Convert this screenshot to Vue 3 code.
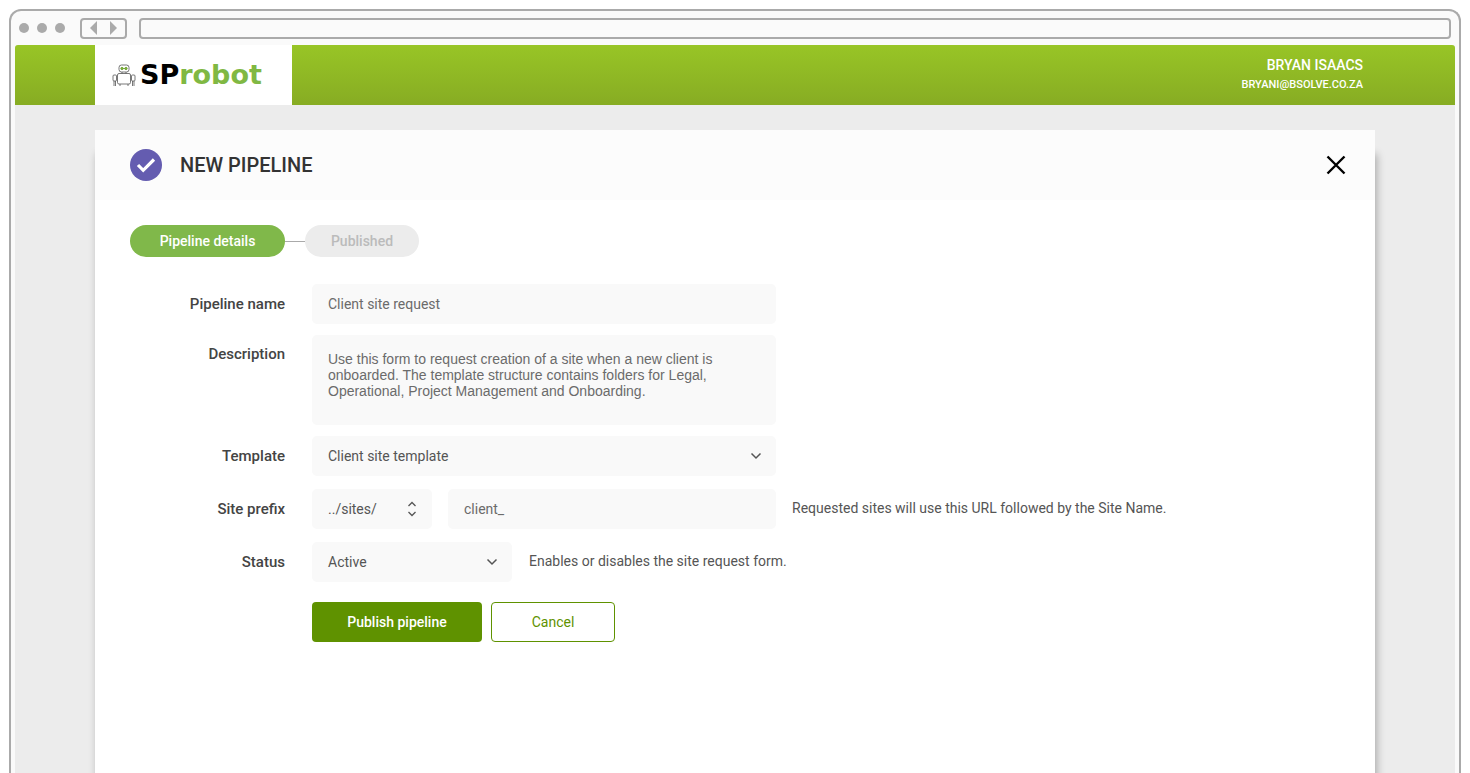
<template>
  <div class="browser">
    <div class="chrome">
      <div class="dots">
        <span class="dot"></span>
        <span class="dot"></span>
        <span class="dot"></span>
      </div>
      <div class="nav-btns">
        <svg width="8" height="14" viewBox="0 0 8 14"><path d="M7 0v14L0 7z" fill="#aaa" /></svg>
        <svg width="8" height="14" viewBox="0 0 8 14"><path d="M1 0v14L8 7z" fill="#aaa" /></svg>
      </div>
      <div class="address"></div>
    </div>

    <div class="viewport">
      <header class="topbar">
        <div class="logo">
          <svg class="robot" width="24" height="23" viewBox="0 0 24 23" fill="none" stroke="#555" stroke-width="0.8">
            <rect x="7" y="1" width="10" height="7" rx="2.500" />
            <circle cx="10" cy="4.500" r="1.200" fill="#7fb83a" stroke="#6a9a30" />
            <circle cx="14" cy="4.500" r="1.200" fill="#7fb83a" stroke="#6a9a30" />
            <path d="M11 4.500h2" stroke="#6a9a30" />
            <path d="M10 8v1.500M14 8v1.500" />
            <rect x="5.500" y="9.500" width="13" height="10.500" rx="1.500" />
            <rect x="1" y="11" width="3.500" height="6" rx="1" />
            <rect x="19.500" y="11" width="3.500" height="6" rx="1" />
            <path d="M2 17v5M3.500 17v5M20.500 17v5M22 17v5M8 20v2M16 20v2" />
          </svg>
          <span class="brand"><b>SP</b><em>robot</em></span>
        </div>
        <div class="user">
          <div class="user-name">BRYAN ISAACS</div>
          <div class="user-mail">BRYANI@BSOLVE.CO.ZA</div>
        </div>
      </header>

      <main class="content">
        <section class="card">
          <div class="card-head">
            <svg width="32" height="32" viewBox="0 0 32 32">
              <circle cx="16" cy="16" r="16" fill="#645cb0" />
              <path d="M8 16l5.200 5.300L24 10.500" fill="none" stroke="#fff" stroke-width="3.200" />
            </svg>
            <h1>NEW PIPELINE</h1>
            <svg class="close" width="20" height="20" viewBox="0 0 20 20">
              <path d="M1.500 1.500l17 17M18.500 1.500l-17 17" stroke="#000" stroke-width="2.400" fill="none" />
            </svg>
          </div>

          <div class="card-body">
            <div class="steps">
              <div class="step active">Pipeline details</div>
              <div class="step-line"></div>
              <div class="step">Published</div>
            </div>

            <div class="form">
              <label class="lbl">Pipeline name</label>
              <input class="field wide soft" type="text" v-model="pipelineName" />

              <label class="lbl lbl-top">Description</label>
              <textarea class="field wide area soft" v-model="description"></textarea>

              <label class="lbl">Template</label>
              <div class="field wide select">
                <span>Client site template</span>
                <svg width="12" height="8" viewBox="0 0 12 8"><path d="M1.500 1.500L6 6l4.500-4.500" fill="none" stroke="#555" stroke-width="1.500" /></svg>
              </div>

              <label class="lbl spaced">Site prefix</label>
              <div class="inline spaced">
                <div class="field select prefix">
                  <span>../sites/</span>
                  <svg width="10" height="16" viewBox="0 0 10 16"><path d="M1.500 5L5 1.500 8.500 5M1.500 11L5 14.500 8.500 11" fill="none" stroke="#555" stroke-width="1.300" /></svg>
                </div>
                <input class="field slug soft" type="text" v-model="slug" />
                <span class="hint">Requested sites will use this URL followed by the Site Name.</span>
              </div>

              <label class="lbl spaced">Status</label>
              <div class="inline spaced">
                <div class="field select status">
                  <span>Active</span>
                  <svg width="12" height="8" viewBox="0 0 12 8"><path d="M1.500 1.500L6 6l4.500-4.500" fill="none" stroke="#555" stroke-width="1.500" /></svg>
                </div>
                <span class="hint">Enables or disables the site request form.</span>
              </div>

              <div class="actions">
                <button class="btn primary">Publish pipeline</button>
                <button class="btn ghost">Cancel</button>
              </div>
            </div>
          </div>
        </section>
      </main>
    </div>
  </div>
</template>

<script setup>
import { ref } from 'vue'

const pipelineName = ref('Client site request')
const description = ref('Use this form to request creation of a site when a new client is onboarded. The template structure contains folders for Legal, Operational, Project Management and Onboarding.')
const slug = ref('client_')
</script>

<style>
html,
body {
  margin: 0;
  background: #fff;
  overflow: hidden;
}
</style>

<style scoped>
.browser {
  box-sizing: border-box;
  height: 764px;
  margin: 9px 9px 0 9px;
  border: 2px solid #aaa;
  border-bottom: 0;
  border-radius: 12px 12px 0 0;
  background: #fafafa;
  padding: 0 4px;
  display: flex;
  flex-direction: column;
  overflow: hidden;
  font-family: Roboto, sans-serif;
}

.chrome {
  height: 34px;
  flex: none;
  display: flex;
  align-items: center;
  padding: 0 4px;
}

.dots {
  display: flex;
  gap: 8px;
  margin-right: 15px;
}

.dot {
  width: 10px;
  height: 10px;
  border-radius: 50%;
  background: #aaa;
}

.nav-btns {
  box-sizing: border-box;
  width: 47px;
  height: 21px;
  border: 2px solid #aaa;
  border-radius: 4px;
  display: flex;
  align-items: center;
  justify-content: center;
  gap: 11px;
  margin-right: 12px;
}

.address {
  box-sizing: border-box;
  flex: 1;
  height: 21px;
  border: 2px solid #aaa;
  border-radius: 4px;
}

.viewport {
  flex: 1;
  background: #ececec;
  border-radius: 3px 3px 0 0;
  overflow: hidden;
}

.topbar {
  height: 60px;
  background: linear-gradient(#98c526, #87ac23);
  display: flex;
  justify-content: space-between;
  padding: 0 92px 0 80px;
}

.logo {
  width: 197px;
  background: #fff;
  display: flex;
  align-items: center;
  padding-left: 17px;
  box-sizing: border-box;
}

.robot {
  margin-right: 4px;
}

.brand {
  font-family: "DejaVu Sans", sans-serif;
  font-size: 27px;
  font-weight: 700;
  line-height: 1;
  padding-bottom: 2px;
}

.brand b {
  color: #000;
}

.brand em {
  font-style: normal;
  color: #80b843;
}

.user {
  color: #fff;
  text-align: right;
  padding-top: 12px;
}

.user-name {
  font-size: 14px;
  font-weight: 500;
  line-height: 17px;
}

.user-mail {
  font-size: 11px;
  font-weight: 500;
  line-height: 13px;
  margin-top: 4px;
}

.content {
  padding: 25px 80px 0;
}

.card {
  background: #fff;
  height: 660px;
  position: relative;
  z-index: 0;
}

/* shadow only starts below the top of the header */
.card::before {
  content: "";
  position: absolute;
  top: 22px;
  left: 0;
  right: 0;
  bottom: 0;
  z-index: -1;
  box-shadow: 2px 2px 8px rgba(0, 0, 0, 0.28);
}

.card-head {
  height: 70px;
  background: #fcfcfc;
  display: flex;
  align-items: center;
  padding: 0 29px 0 35px;
}

.card-head h1 {
  margin: 0 0 0 18px;
  font-size: 20px;
  font-weight: 500;
  color: #333;
  flex: 1;
}

.card-body {
  background: #fff;
  height: 590px;
  box-sizing: border-box;
  padding: 25px 35px 0;
}

.steps {
  display: flex;
  align-items: center;
  font-size: 14px;
  font-weight: 500;
}

.step {
  height: 32px;
  line-height: 32px;
  width: 114px;
  text-align: center;
  border-radius: 16px;
  background: #ececec;
  color: #bbb;
}

.step.active {
  width: 155px;
  background: #80b84a;
  color: #fff;
}

.step-line {
  width: 20px;
  height: 1px;
  background: #aaa;
}

.form {
  display: grid;
  grid-template-columns: 155px 1fr;
  column-gap: 27px;
  margin-top: 27px;
  align-items: center;
}

.lbl {
  font-size: 15px;
  font-weight: 500;
  color: #444;
  text-align: right;
}

.lbl-top {
  align-self: start;
  padding-top: 21px;
}

.spaced {
  margin-top: 13px;
}

.field {
  box-sizing: border-box;
  height: 40px;
  background: #f9f9f9;
  border: 0;
  border-radius: 5px;
  padding: 0 16px;
  font-family: Roboto, sans-serif;
  font-size: 14px;
  color: #555;
  outline: none;
  margin: 0;
}

.soft {
  color: #6b6b6b;
}

.wide {
  width: 464px;
}

.area {
  height: 90px;
  margin: 11px 0;
  padding: 16px 16px 0;
  font-family: "Liberation Sans", sans-serif;
  line-height: 16px;
  resize: none;
  overflow: hidden;
}

.select {
  display: flex;
  align-items: center;
  justify-content: space-between;
  padding-right: 14px;
}

.inline {
  display: flex;
  align-items: center;
}

.prefix {
  width: 120px;
  margin-right: 16px;
  padding-right: 15px;
}

.slug {
  width: 328px;
}

.status {
  width: 200px;
}

.hint {
  font-size: 14px;
  color: #555;
  margin-left: 17px;
  padding-bottom: 2px;
}

.slug + .hint {
  margin-left: 16px;
}

.actions {
  grid-column: 2;
  display: flex;
  gap: 9px;
  margin-top: 20px;
}

.btn {
  box-sizing: border-box;
  height: 40px;
  border-radius: 4px;
  font-family: Roboto, sans-serif;
  font-size: 14px;
}

.primary {
  width: 170px;
  background: #5f9200;
  border: 0;
  color: #fff;
  font-weight: 500;
}

.ghost {
  width: 124px;
  background: #fff;
  border: 1px solid #5f9200;
  color: #5f9200;
}
</style>
